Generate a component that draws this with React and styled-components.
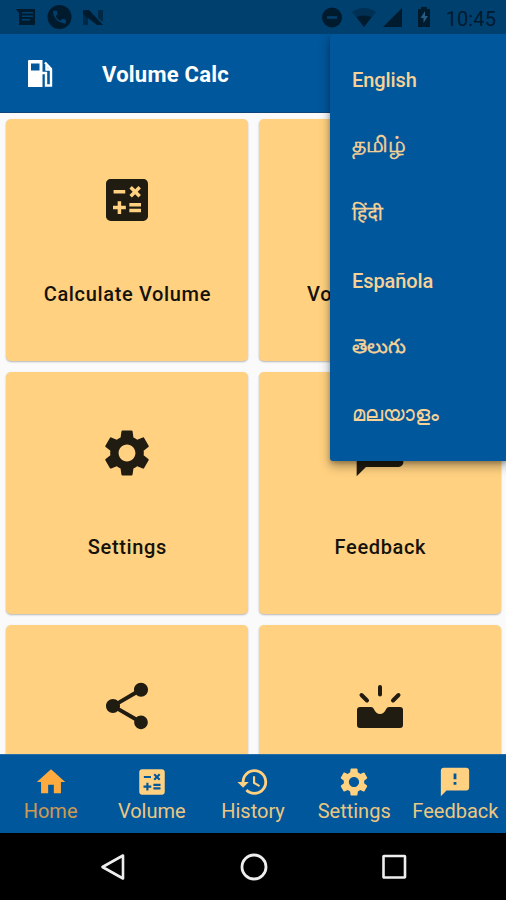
import React from "react";
import styled, { createGlobalStyle } from "styled-components";
import {
  MdCalculate, MdSettings, MdShare, MdHome, MdHistory, MdFeedback, MdPhone,
} from "react-icons/md";

const GlobalStyle = createGlobalStyle`
  * { box-sizing: border-box; }
  body { margin: 0; overflow: hidden; font-family: Roboto, "Noto Sans", sans-serif; }
`;

const Screen = styled.div`
  position: relative;
  display: flex;
  flex-direction: column;
  width: 506px;
  height: 900px;
  overflow: hidden;
  background: #fafafa;
`;

const StatusBar = styled.div`
  display: flex;
  align-items: center;
  flex: 0 0 34px;
  height: 34px;
  background: #00406f;
  color: #001a2e;
`;

const StatusIcons = styled.svg`
  display: block;
  flex: none;
  width: ${(p) => p.$width}px;
  height: 34px;
`;

const Clock = styled.span`
  margin: 0 10px 0 8px;
  padding-top: 3px;
  font-size: 20px;
  line-height: 30px;
  letter-spacing: 0.1px;
`;

const Spacer = styled.div`
  flex: 1;
`;

const AppBar = styled.header`
  display: flex;
  align-items: center;
  flex: 0 0 79px;
  padding: 1px 0 0 28px;
  background: #01579b;
  border-bottom: 1px solid #0c4579;
  color: #fff;
`;

const Title = styled.h1`
  margin: 0 0 0 49px;
  padding-top: 2px;
  font-size: 22px;
  font-weight: 700;
  line-height: 30px;
  letter-spacing: 0.25px;
`;

const Grid = styled.main`
  display: grid;
  grid-template-columns: 242px 242px;
  grid-auto-rows: 242px;
  gap: 11px;
  flex: 1 1 0;
  min-height: 0;
  padding: 6px 0 0 6.4px;
  overflow: hidden;
`;

const Card = styled.section`
  display: flex;
  flex-direction: column;
  align-items: center;
  padding-top: 53px;
  border-radius: 5px;
  background: #ffd180;
  box-shadow: 0 1px 2px rgba(0, 0, 0, 0.28);
  color: #211c11;
`;

const CardLabel = styled.div`
  margin-top: 53px;
  color: #15120b;
  font-size: 20px;
  font-weight: 500;
  line-height: 26px;
  letter-spacing: 0.65px;
  white-space: nowrap;
`;

const BottomNav = styled.nav`
  display: grid;
  grid-template-columns: repeat(5, 1fr);
  flex: 0 0 79px;
  background: #01579b;
  border-top: 1px solid #2a6ca5;
`;

const NavItem = styled.div`
  display: flex;
  flex-direction: column;
  align-items: center;
  padding-top: 10px;
  color: ${(p) => (p.$active ? "#ffab40" : "#ffd180")};
`;

const NavLabel = styled.span`
  font-size: 20px;
  line-height: 24px;
  opacity: ${(p) => (p.$active ? 0.8 : 0.92)};
`;

const SystemNav = styled.div`
  display: flex;
  justify-content: space-between;
  align-items: center;
  flex: 0 0 67px;
  padding: 0 98px 0 99px;
  background: #000;
`;

const Menu = styled.div`
  position: absolute;
  top: 34px;
  left: 330px;
  width: 178px;
  height: 427px;
  padding: 12px 0 0 22px;
  border-radius: 3px;
  background: #01579b;
  box-shadow: 0 5px 11px rgba(0, 0, 0, 0.35), 0 2px 4px rgba(0, 0, 0, 0.2);
  clip-path: inset(0 0 -30px -30px);
`;

const MenuItem = styled.div`
  display: flex;
  align-items: center;
  height: 67.2px;
  padding-bottom: ${(p) => p.$lift || 0}px;
  color: #f6d297;
  font-size: ${(p) => p.$size || 20}px;
  font-weight: ${(p) => (p.$size ? 400 : 500)};
  line-height: 28px;
  letter-spacing: ${(p) => (p.$size ? 0 : -0.1)}px;
  -webkit-text-stroke: ${(p) => p.$stroke || 0}px currentColor;
  white-space: nowrap;
`;

function InboxBurst() {
  return (
    <svg width="56" height="56" viewBox="0 0 56 56">
      <path d="M8 29q-3 0-3 3v15q0 3 3 3h40q3 0 3-3V32q0-3-3-3H37q-2 0-3 2.200Q32 36 28 36t-6-4.800Q21 29 19 29z" fill="currentColor" />
      <path d="M28 9v7.500M9.500 17l5.500 5.500M46.500 17l-5.500 5.500" fill="none" stroke="currentColor" strokeWidth="4" strokeLinecap="round" />
    </svg>
  );
}

function FuelPump() {
  return (
    <svg width="25" height="27" viewBox="0 0 25 27">
      <path fillRule="evenodd" fill="#fff" d="M1 0h13.500v27H0V1q0-1 1-1zM3 3.500v7h8.500v-7z" />
      <path fill="none" stroke="#fff" strokeWidth="2.400" d="M14 13h4V25.500h5V9l-6-6.500M18.500 5v4.500h4.500" />
    </svg>
  );
}

const cards = [
  { id: "calculate", label: "Calculate Volume", Icon: MdCalculate },
  { id: "history", label: "Volume History", Icon: MdHistory },
  { id: "settings", label: "Settings", Icon: MdSettings },
  { id: "feedback", label: "Feedback", Icon: MdFeedback },
  { id: "share", Icon: MdShare },
  { id: "inbox", Icon: InboxBurst },
];

const tabs = [
  ["Home", MdHome], ["Volume", MdCalculate], ["History", MdHistory],
  ["Settings", MdSettings], ["Feedback", MdFeedback],
];

const languages = [
  { name: "English" },
  { name: "தமிழ்", size: 22, stroke: 0.5, lift: 3 },
  { name: "हिंदी", size: 19.5, stroke: 0.3 },
  { name: "Española" },
  { name: "తెలుగు", size: 19.7, stroke: 0.35, lift: 2 },
  { name: "മലയാളം", size: 20.7, lift: 4 },
];

export default function App() {
  return (
    <Screen>
      <GlobalStyle />
      <StatusBar>
        <StatusIcons $width={110} viewBox="0 0 110 34">
          <path fill="currentColor" fillRule="evenodd" d="M16 9h19v16H19V13zM22 12v1.500h11V12zM22 15.500V17h11v-1.500zM22 19v1.500h8V19z" />
          <circle cx="59.500" cy="17" r="12" fill="currentColor" />
          <g transform="translate(51 8.500)" color="#00406f"><MdPhone size={17} /></g>
          <path fill="currentColor" opacity=".6" d="M83 13l5 4v8h-5zM98 10h5v12l-5-4z" />
          <path fill="currentColor" d="M83 10h6l14 15h-6L83 14z" />
        </StatusIcons>
        <Spacer />
        <StatusIcons $width={120} viewBox="318 0 120 34">
          <circle cx="332" cy="17.500" r="10" fill="currentColor" />
          <path d="M327 17.500h10" stroke="#00406f" strokeWidth="2.500" />
          <path d="M352 12q12-8 24 0l-12 15z" fill="currentColor" opacity=".4" />
          <path d="M356.500 17q7.500-3 15 0L364 27z" fill="currentColor" />
          <path d="M402 8v19h-19z" fill="currentColor" />
          <path fill="currentColor" d="M418 9h3V7h6v2h3v18h-12z" />
          <path d="M425 11l-4.500 7h3v5l4.500-7h-3z" fill="#285b82" />
        </StatusIcons>
        <Clock>10:45</Clock>
      </StatusBar>
      <AppBar>
        <FuelPump />
        <Title>Volume Calc</Title>
      </AppBar>
      <Grid>
        {cards.map(({ id, label, Icon }) => (
          <Card key={id}>
            <Icon size={56} />
            {label && <CardLabel>{label}</CardLabel>}
          </Card>
        ))}
      </Grid>
      <BottomNav>
        {tabs.map(([label, Icon], i) => (
          <NavItem key={label} $active={i === 0}>
            <Icon size={34} />
            <NavLabel $active={i === 0}>{label}</NavLabel>
          </NavItem>
        ))}
      </BottomNav>
      <SystemNav>
        <svg width="28" height="28" viewBox="0 0 28 28"><path d="M3.500 14L24 2.500v23z" fill="none" stroke="#eee" strokeWidth="2.600" strokeLinejoin="round" /></svg>
        <svg width="28" height="28" viewBox="0 0 28 28"><circle cx="14" cy="14" r="12" fill="none" stroke="#eee" strokeWidth="2.800" /></svg>
        <svg width="28" height="28" viewBox="0 0 28 28"><rect x="3.500" y="3" width="21.500" height="21.500" rx=".5" fill="none" stroke="#eee" strokeWidth="2.600" /></svg>
      </SystemNav>
      <Menu>
        {languages.map(({ name, size, stroke, lift }) => (
          <MenuItem key={name} $size={size} $stroke={stroke} $lift={lift}>{name}</MenuItem>
        ))}
      </Menu>
    </Screen>
  );
}
